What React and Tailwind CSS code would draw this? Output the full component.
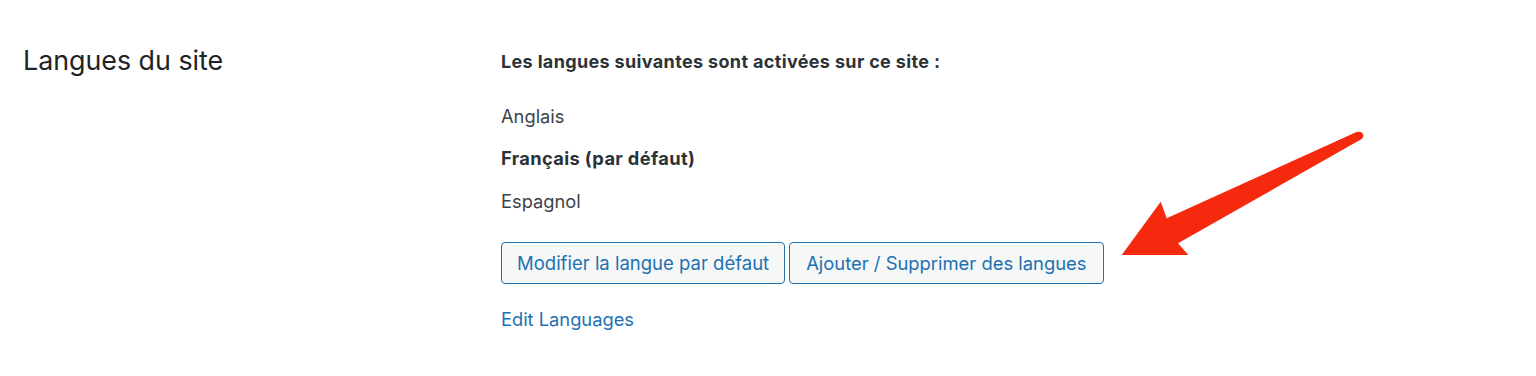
import React from "react";

function Arrow() {
  return (
    <svg
      className="absolute left-[1100px] top-[120px]"
      width="280"
      height="150"
      viewBox="0 0 280 150"
    >
      <path
        d="M21.7 135 L60.7 81.7 L66.7 98.3 L256.5 12 Q262 10.5 263.5 15 Q263.5 18.5 259 20.5 L78 123.3 L88.3 135 Z"
        fill="#f5290e"
      />
    </svg>
  );
}

export default function App() {
  return (
    <div
      className="relative h-[376px] w-[1536px] bg-white overflow-hidden"
      style={{ fontFamily: "Inter, 'Liberation Sans', Arial, sans-serif" }}
    >
      <div className="flex">
        <div className="w-[501px] shrink-0 pl-[23px] pt-[42px]">
          <h2 className="text-[26.8px] leading-[36px] font-normal text-[#1d2327]">
            Langues du site
          </h2>
        </div>
        <div className="flex flex-col pt-[50px] text-[18.3px] leading-[24px] text-[#3c434a]">
          <p className="font-bold text-[18px] tracking-[0.35px] text-[#2c3338]">
            Les langues suivantes sont activées sur ce site :
          </p>
          <p className="mt-[30px]">Anglais</p>
          <p className="mt-[18px] font-bold text-[18.3px] tracking-[0.35px] text-[#2c3338]">
            Français (par défaut)
          </p>
          <p className="mt-[19px]">Espagnol</p>
          <div className="mt-[29px] flex gap-[4px]">
            <button className="h-[42px] rounded-[4px] border border-[#2271b1] bg-[#f6f7f7] px-[15px] text-[18.5px] text-[#2271b1]">
              Modifier la langue par défaut
            </button>
            <button className="h-[42px] rounded-[4px] border border-[#2271b1] bg-[#f6f7f7] px-[16px] text-[18.4px] text-[#2271b1]">
              Ajouter / Supprimer des langues
            </button>
          </div>
          <a className="mt-[23px] text-[#2271b1]" href="#">
            Edit Languages
          </a>
        </div>
      </div>
      <Arrow />
    </div>
  );
}
